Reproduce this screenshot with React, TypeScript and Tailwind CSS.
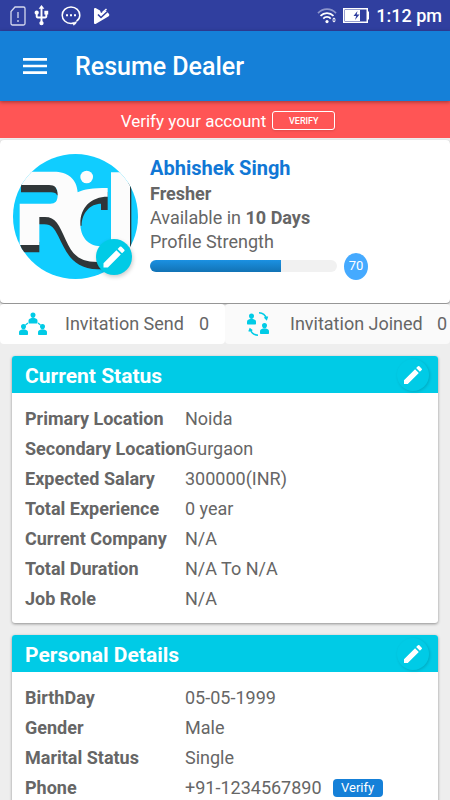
import { MdEdit, MdMenu, MdUsb } from "react-icons/md";
import { clsx } from "clsx";

type Detail = {
  label: string;
  value: string;
  verify?: boolean;
};

const currentStatus: Detail[] = [
  { label: "Primary Location", value: "Noida" },
  { label: "Secondary Location", value: "Gurgaon" },
  { label: "Expected Salary", value: "300000(INR)" },
  { label: "Total Experience", value: "0 year" },
  { label: "Current Company", value: "N/A" },
  { label: "Total Duration", value: "N/A To N/A" },
  { label: "Job Role", value: "N/A" },
];

const personalDetails: Detail[] = [
  { label: "BirthDay", value: "05-05-1999" },
  { label: "Gender", value: "Male" },
  { label: "Marital Status", value: "Single" },
  { label: "Phone", value: "+91-1234567890", verify: true },
];

const StatusBar = () => (
  <div className="flex h-[31px] shrink-0 items-center bg-[#303f9f] pl-2.5 pr-2 text-white">
    <svg viewBox="0 0 16 20" className="h-5 w-4" fill="none" stroke="#d5d9ee" strokeWidth="1.3">
      <path d="M5 1h8.5A1.5 1.5 0 0 1 15 2.500v15a1.500 1.500 0 0 1-1.500 1.500h-11A1.500 1.500 0 0 1 1 17.500V5.500z" />
      <path d="M8 6v6M8 14v2" />
    </svg>
    <MdUsb className="ml-1 size-[23px]" />
    <svg viewBox="0 0 20 20" className="ml-2 size-5" fill="none" stroke="white" strokeWidth="1.5">
      <path d="M15.500 15.200c2-1.400 3.300-3.400 3.300-6C18.800 4.700 14.900 1 10 1S1.200 4.700 1.200 9.200 5 17.400 10 17.400c.9 0 1.800-.1 2.600-.3" />
      <path d="M11.500 17l4-1.500c0 1.500-1 3-3 3.700z" fill="white" strokeWidth=".5" />
      <path d="M5 9.200h2M9 9.200h2M13 9.200h2" strokeWidth="2" />
    </svg>
    <svg viewBox="0 0 17 18" className="ml-3 h-[18px] w-[17px]">
      <path d="M1 2C1 1 2 .8 3 1.300L7 3.600l1 2.400 5-2.500 3 3.500c.7 1 .3 1.800-.7 2.400L3 16.800c-1 .5-2 .2-2-1z" fill="white" />
      <path d="M5 7.500l3 3L15 4" fill="none" stroke="#303f9f" strokeWidth="1.600" />
      <path d="M9.500 5.500L13.500 2" fill="none" stroke="white" strokeWidth="1.500" />
    </svg>
    <svg viewBox="0 0 20 16" className="ml-auto h-4 w-5" fill="none" stroke="white" strokeWidth="1.700">
      <path d="M1 5.200C6-.2 14-.2 19 5.200" stroke="#8d96cc" />
      <path d="M3.500 7.800c3.500-3.700 9.500-3.700 13 0M6.300 10.600c2-2.200 5.400-2.200 7.400 0" />
      <circle cx="10" cy="13.600" r="1.600" fill="white" stroke="none" />
      <path d="M15 11.500l2-2 2 2zM15 12.500l2 2 2-2z" fill="white" stroke="none" />
    </svg>
    <svg viewBox="0 0 27 15" className="ml-1.5 h-[15px] w-[27px]">
      <rect x=".75" y=".75" width="23.500" height="13.500" fill="none" stroke="white" strokeWidth="1.500" />
      <path d="M2 2h15v11H2zM24.500 3.500H26v8h-1.500z" fill="white" />
      <path d="M14.500 3l-4 5h2.700l-1.200 4 4.500-5.500h-2.800z" fill="#303f9f" />
    </svg>
    <span className="ml-1.5 text-lg font-medium leading-5">1:12 pm</span>
  </div>
);

const AvatarLogo = () => (
  <svg viewBox="38 26 375 375" className="size-[125px]" role="img" aria-label="Abhishek Singh">
    <clipPath id="avatar">
      <circle cx="225.500" cy="213.500" r="187.500" />
    </clipPath>
    <g clipPath="url(#avatar)">
      <path d="M38 26h375v375H38z" fill="#10cdff" />
      <g fill="#303638">
        <path d="M62 116h100l14 34h-6c-2-7-8-9-18-9H62z" />
        <path d="M60 290h57v31H60z" />
        <path d="M114 210v27h18c22 0 30 12 42 36 24 50 44 97 118 99h30v-40l-80-20-70-102z" />
        <path d="M322 140v54h-20v-19c-32 0-58 27-58 66h-8v-46l40-50z" />
        <path d="M384 80h9v240h-9z" />
      </g>
      <g fill="#fcfcfc">
        <path d="M62 79h98c42 0 70 22 72 62 20-10 44-13 90-13v26c-50 0-82 32-82 80 0 42 24 68 60 69h32V81h57v269h-97c-58 0-76-24-96-67-20-44-30-68-62-68h-17v84H58V175h92c15 0 22-8 22-27 0-20-8-29-26-29H62z" />
        <circle cx="259" cy="95" r="19" />
      </g>
    </g>
  </svg>
);

const Person = ({ x, y }: { x: number; y: number }) => (
  <g transform={`translate(${x} ${y})`} fill="#00cbe6">
    <path d="M4.500 0C6.200 0 7 1.200 7 2.600S6 5.600 4.500 5.600 2 4 2 2.600 2.800 0 4.500 0z" />
    <path d="M0 10V8.200C0 6.800 1.200 6 3 5.500h3c1.800.5 3 1.300 3 2.700V10c0 .6-.4 1-1 1H1c-.6 0-1-.4-1-1z" />
  </g>
);

const SendIcon = () => (
  <svg viewBox="0 0 28 24" className="h-6 w-7">
    <Person x={9.500} y={0.500} />
    <Person x={0} y={12} />
    <Person x={19} y={12} />
    <path d="M9 11l-2.500 2M19 11l2.500 2" stroke="#00cbe6" strokeWidth="1.200" />
  </svg>
);

const JoinedIcon = () => (
  <svg viewBox="0 0 24 26" className="h-[26px] w-6">
    <Person x={1} y={2.500} />
    <Person x={14} y={12} />
    <path
      d="M13 1.800c4 .2 6.500 2.500 7.500 6M18.500 6.300l2 2 1-2.800M12 24.300c-4-.2-6.500-2.200-7.800-5.800M3 20.500l1-2.500 2.200 1.700"
      fill="none"
      stroke="#00cbe6"
      strokeWidth="1.500"
    />
  </svg>
);

type EditButtonProps = {
  label: string;
  className?: string;
  iconClassName?: string;
};

const EditButton = ({ label, className, iconClassName = "size-6" }: EditButtonProps) => (
  <button
    type="button"
    aria-label={label}
    className={clsx("flex items-center justify-center rounded-full bg-[#00cbe6] text-white", className)}
  >
    <MdEdit className={iconClassName} />
  </button>
);

const DetailCard = ({ title, details }: { title: string; details: Detail[] }) => (
  <section className="overflow-hidden rounded-[3px] bg-white shadow-[0_1px_3px_rgba(0,0,0,0.4)]">
    <header className="flex h-[37px] items-center justify-between bg-[#00cbe6] pl-[13px] pr-[9px]">
      <h2 className="pt-0.5 text-[21px] font-bold leading-7 text-white">{title}</h2>
      <EditButton label={`Edit ${title}`} className="size-8 shadow-[1px_1px_3px_rgba(0,0,0,0.15)]" />
    </header>
    <dl className="px-[13px] pb-[9px] pt-[11px] text-lg leading-[30px] text-[#666666]">
      {details.map((detail) => (
        <div key={detail.label} className="flex">
          <dt className="w-40 shrink-0 whitespace-nowrap font-bold">{detail.label}</dt>
          <dd className="flex items-center">
            {detail.value}
            {detail.verify && (
              <button
                type="button"
                className="ml-[11px] h-[18px] w-[50px] rounded bg-[#1580d8] text-[13px] leading-[18px] text-white"
              >
                Verify
              </button>
            )}
          </dd>
        </div>
      ))}
    </dl>
  </section>
);

export default function App() {
  return (
    <div className="flex h-screen flex-col overflow-hidden bg-[#eeeeee] font-['Roboto',sans-serif]">
      <StatusBar />
      <header className="relative z-10 flex h-[70px] shrink-0 items-center bg-[#1580d8] pl-[19px] text-white shadow-[0_1px_4px_rgba(0,0,0,0.4)]">
        <button type="button" aria-label="Open menu">
          <MdMenu className="size-8" />
        </button>
        <h1 className="ml-6 pt-0.5 text-[25px] font-medium leading-8">Resume Dealer</h1>
      </header>

      <main className="min-h-0 flex-1 overflow-hidden">
        <div className="flex h-[37px] items-center justify-center gap-1.5 bg-[#ff5555] pl-1.5 pt-0.5 text-white">
          <p className="text-[17px] leading-6">Verify your account</p>
          <button
            type="button"
            className="h-[19px] w-[63px] rounded-[3px] border border-white text-[9px] font-medium leading-4 shadow-sm"
          >
            VERIFY
          </button>
        </div>

        <section className="mt-0.5 flex h-[163px] gap-3 rounded bg-white pl-[13px] pt-3 text-[#666666] shadow-[0_1px_2px_rgba(0,0,0,0.5)]">
          <div className="relative mt-0.5 h-[125px] w-[125px] shrink-0">
            <AvatarLogo />
            <EditButton
              label="Edit photo"
              className="absolute bottom-1 right-1.5 size-9 shadow-[1px_2px_4px_rgba(0,0,0,0.2)]"
              iconClassName="size-7"
            />
          </div>
          <div className="flex-1 text-lg leading-6">
            <h2 className="mt-1 text-xl font-bold leading-6 text-[#1177d5]">Abhishek Singh</h2>
            <p className="mt-0.5 font-bold">Fresher</p>
            <p>
              Available in <b>10 Days</b>
            </p>
            <p>Profile Strength</p>
            <div className="flex h-6 items-center gap-[7px]">
              <div className="h-3 w-[187px] overflow-hidden rounded-full bg-[#f1f1f1]">
                <div className="h-full bg-linear-to-b from-[#1b91e2] to-[#1273b5]" style={{ width: "70%" }} />
              </div>
              <span className="flex h-[27px] w-6 items-center justify-center rounded-[50%] bg-[#45aaff] text-[13px] leading-4 text-white">
                70
              </span>
            </div>
          </div>
        </section>

        <section className="mt-px grid h-10 grid-cols-2 text-lg leading-6 text-[#666666]">
          <div className="flex items-center rounded bg-white pl-[19px]">
            <SendIcon />
            <span className="ml-[18px]">Invitation Send</span>
            <span className="ml-auto mr-4">0</span>
          </div>
          <div className="flex items-center rounded bg-[#fafafa] pl-[21px]">
            <JoinedIcon />
            <span className="ml-5">Invitation Joined</span>
            <span className="ml-auto mr-[3px]">0</span>
          </div>
        </section>

        <div className="flex flex-col gap-3 p-3">
          <DetailCard title="Current Status" details={currentStatus} />
          <DetailCard title="Personal Details" details={personalDetails} />
        </div>
      </main>
    </div>
  );
}
